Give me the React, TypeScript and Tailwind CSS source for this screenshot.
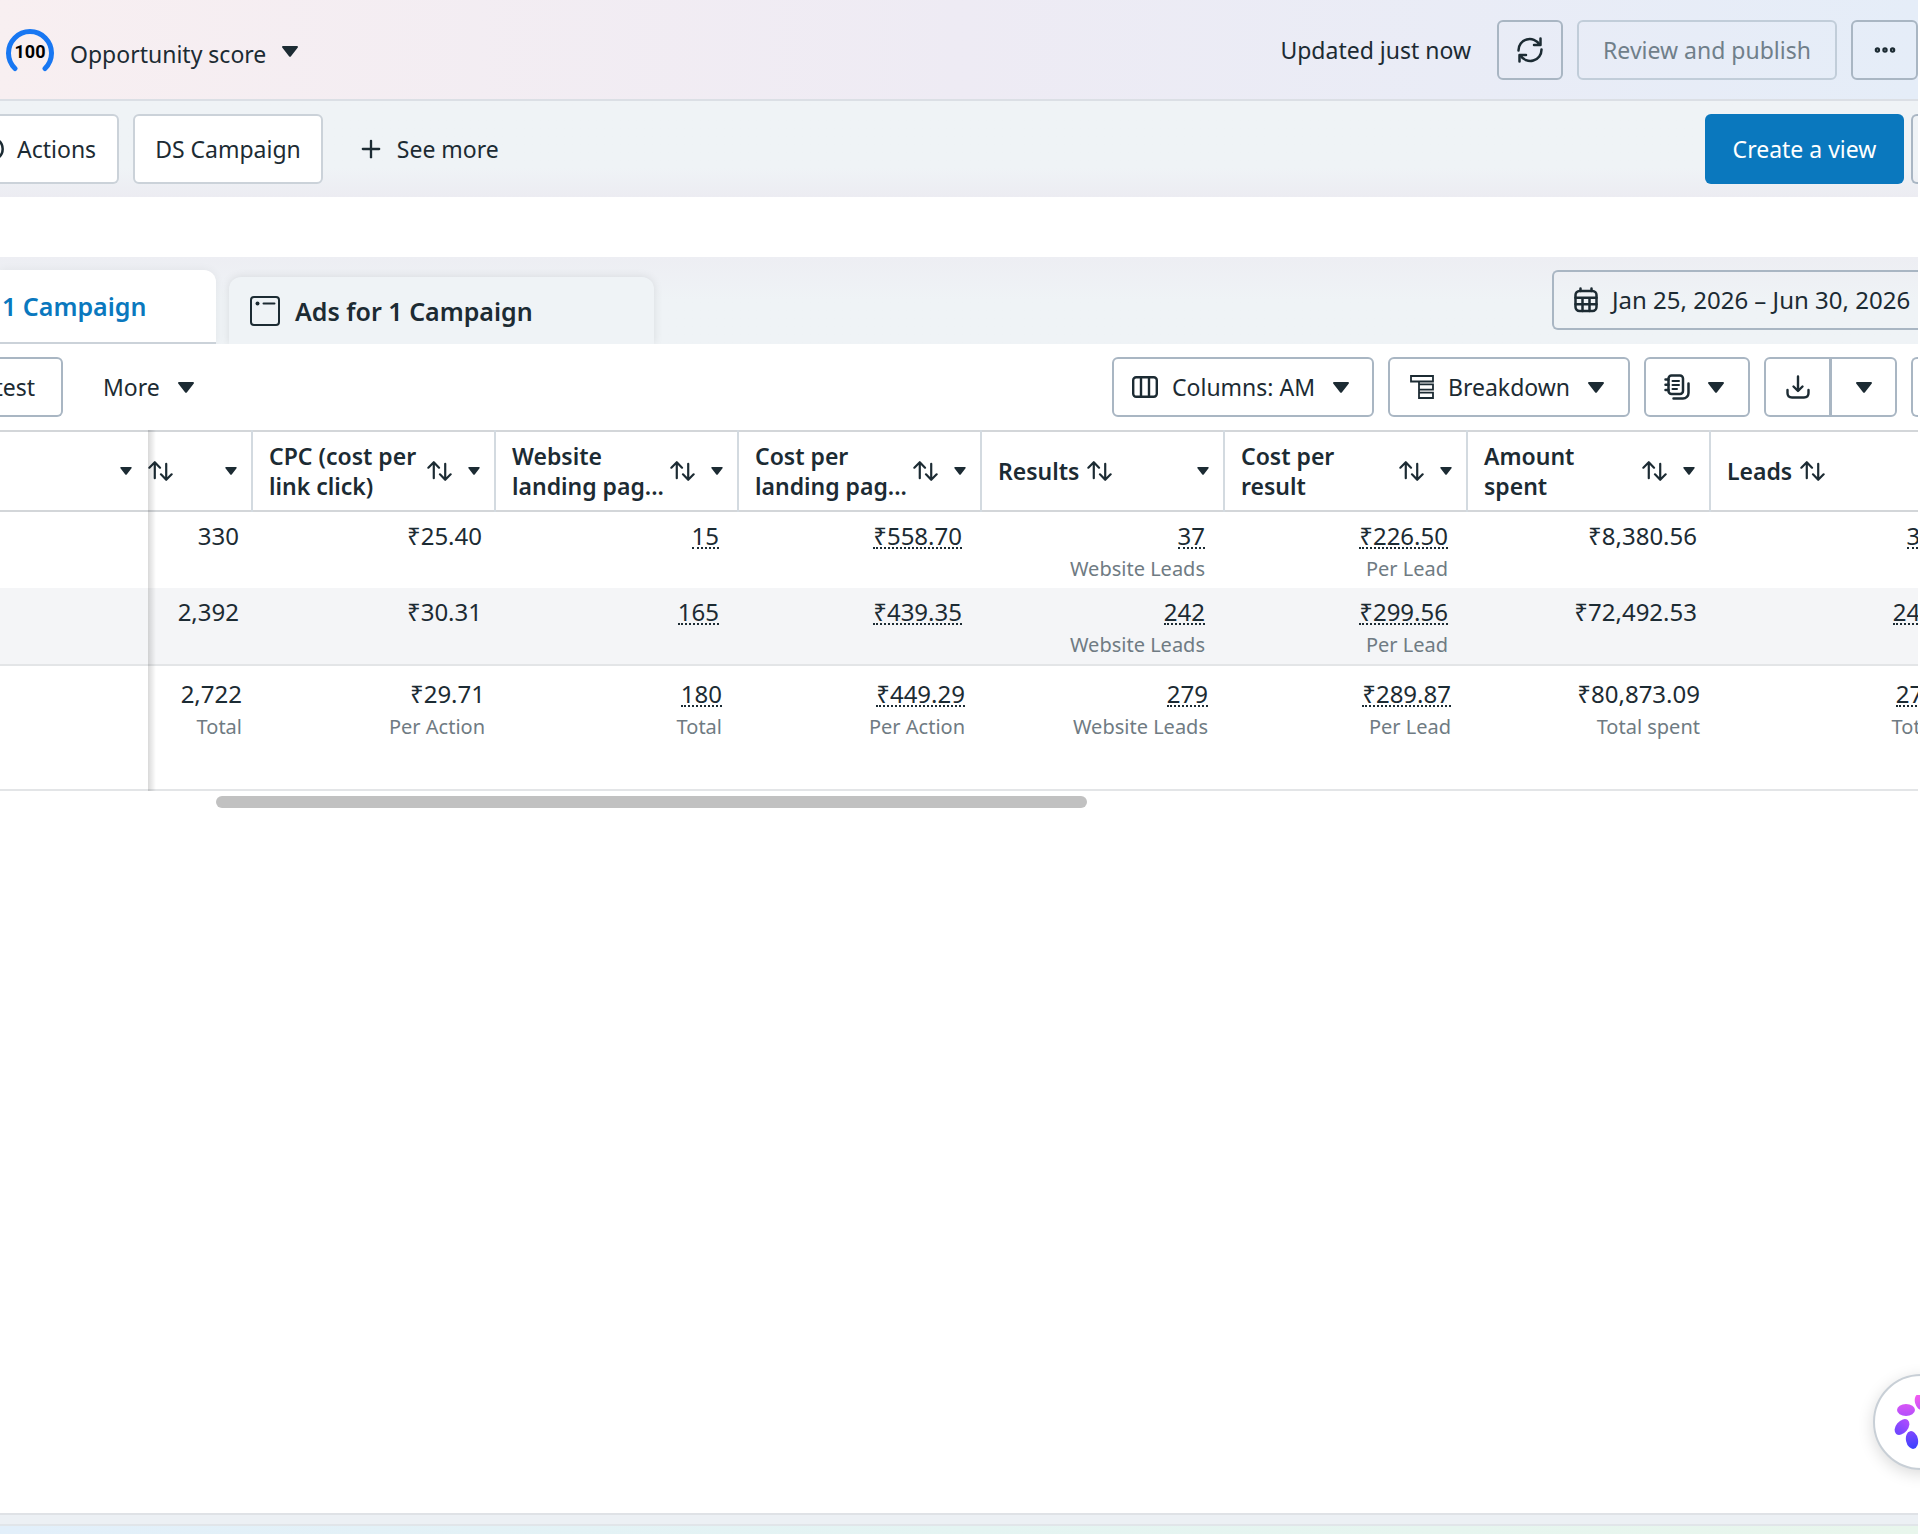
import type { ReactNode } from "react";
import { Ellipsis, Plus } from "lucide-react";

type Cell = { value: string; note?: string; dotted?: boolean };

type Column = { lines: string[]; stacked?: boolean; caret?: boolean };

const COLUMNS: Column[] = [
  { lines: ["CPC (cost per", "link click)"], stacked: true, caret: true },
  { lines: ["Website", "landing pag..."], stacked: true, caret: true },
  { lines: ["Cost per", "landing pag..."], stacked: true, caret: true },
  { lines: ["Results"], caret: true },
  { lines: ["Cost per", "result"], stacked: true, caret: true },
  { lines: ["Amount", "spent"], stacked: true, caret: true },
  { lines: ["Leads"] },
];

const ROWS: Cell[][] = [
  [
    { value: "330" },
    { value: "₹25.40" },
    { value: "15", dotted: true },
    { value: "₹558.70", dotted: true },
    { value: "37", note: "Website Leads", dotted: true },
    { value: "₹226.50", note: "Per Lead", dotted: true },
    { value: "₹8,380.56" },
    { value: "37", dotted: true },
  ],
  [
    { value: "2,392" },
    { value: "₹30.31" },
    { value: "165", dotted: true },
    { value: "₹439.35", dotted: true },
    { value: "242", note: "Website Leads", dotted: true },
    { value: "₹299.56", note: "Per Lead", dotted: true },
    { value: "₹72,492.53" },
    { value: "242", dotted: true },
  ],
];

const TOTALS: Cell[] = [
  { value: "2,722", note: "Total" },
  { value: "₹29.71", note: "Per Action" },
  { value: "180", note: "Total", dotted: true },
  { value: "₹449.29", note: "Per Action", dotted: true },
  { value: "279", note: "Website Leads", dotted: true },
  { value: "₹289.87", note: "Per Lead", dotted: true },
  { value: "₹80,873.09", note: "Total spent" },
  { value: "279", note: "Total", dotted: true },
];

function Caret({ small = false }: { small?: boolean }) {
  return (
    <svg viewBox="0 0 16 11" className={small ? "w-3 h-2 shrink-0" : "w-4 h-[11px] shrink-0"} fill="currentColor">
      <path d="M1.2 0h13.6c1 0 1.5 1 .8 1.8L9 10.3c-.5.7-1.5.7-2 0L.4 1.8C-.3 1 .2 0 1.2 0z" />
    </svg>
  );
}

function SortIcon() {
  return (
    <svg viewBox="0 0 26 21" className="w-[25px] h-5 shrink-0" fill="none" stroke="currentColor" strokeWidth="2.3" strokeLinecap="round" strokeLinejoin="round">
      <path d="M7 18V1.5M1.3 7 7 1.3 12.5 7M19 3v16.5M13.5 14l5.500 5.700 5.700-5.700" />
    </svg>
  );
}

function RefreshIcon() {
  return (
    <svg viewBox="0 0 26 26" className="w-[26px] h-[26px]" fill="none" stroke="currentColor" strokeWidth="2.5" strokeLinecap="round" strokeLinejoin="round">
      <path d="M1.500 13.500A11.300 11.300 0 0 1 22.500 7.500M24.500 12.500A11.300 11.300 0 0 1 3.500 18.500" />
      <path d="M23.500 1.500V8H17M2.500 24.500V18H9" />
    </svg>
  );
}

function ColumnsIcon() {
  return (
    <svg viewBox="0 0 26 22" className="w-[26px] h-[22px]" fill="none" stroke="currentColor" strokeWidth="2.4">
      <rect x="1.2" y="1.2" width="23.6" height="19.6" rx="3" />
      <path d="M9 1v20M17 1v20" />
    </svg>
  );
}

function BreakdownIcon() {
  return (
    <svg viewBox="0 0 24 24" className="w-6 h-6" fill="none" stroke="currentColor" strokeWidth="1.8">
      <path d="M1 1h22v5.500H1zM9 9.300h14v5.400H9zM9 17.700h14v5.300H9zM9 6.500v2.800M9 14.700v3" />
    </svg>
  );
}

function ReportsIcon() {
  return (
    <svg viewBox="0 0 26 26" className="w-[26px] h-[26px]" fill="none" stroke="currentColor" strokeWidth="2.5" strokeLinecap="round" strokeLinejoin="round">
      <rect x="4.5" y="1.5" width="14.5" height="18.5" rx="3" />
      <path d="M8.500 7h6.500M8.500 11h6.500M8.500 15h4.500" strokeWidth="2" />
      <path d="M1.500 5.500h3M1.500 10.700h3M1.500 16h3M24.500 9.500V19a5.500 5.500 0 0 1-5.500 5.500h-9.500" />
    </svg>
  );
}

function DownloadIcon() {
  return (
    <svg viewBox="0 0 24 24" className="w-6 h-6" fill="none" stroke="currentColor" strokeWidth="2.4" strokeLinecap="round" strokeLinejoin="round">
      <path d="M12 1.500V15M7.500 11.500l4.500 4.500 4.500-4.500M1.500 15v3c0 3 1.500 4.500 4.500 4.500h12c3 0 4.500-1.500 4.500-4.500v-3" />
    </svg>
  );
}

function CalendarIcon() {
  return (
    <svg viewBox="0 0 24 26" className="w-6 h-[26px] shrink-0" fill="none" stroke="currentColor" strokeWidth="2.5" strokeLinecap="round">
      <rect x="1.500" y="4" width="21" height="20" rx="4" />
      <path d="M6.500 1.500V4M17.500 1.500V4M1.500 10.800h21M1.500 17.300h21M8.500 11v13M15.500 11v13" />
    </svg>
  );
}

function AdIcon() {
  return (
    <svg viewBox="0 0 30 30" className="w-[30px] h-[30px]" fill="none" stroke="currentColor" strokeWidth="2" strokeLinecap="round">
      <rect x="1" y="1" width="28" height="28" rx="3" />
      <path d="M13.500 7.500h11" />
      <circle cx="7.500" cy="7.500" r="2" fill="currentColor" stroke="none" />
    </svg>
  );
}

function ScoreRing() {
  return (
    <div className="relative w-12 h-12">
      <svg viewBox="0 0 48 48" className="w-12 h-12" fill="none" stroke="#1877f2" strokeWidth="5" strokeLinecap="round">
        <path d="M9 40.500A21.500 21.500 0 1 1 39 40.500" />
      </svg>
      <span className="absolute inset-0 flex items-center justify-center font-['Roboto'] text-[18px] leading-[44px] font-bold text-black">100</span>
    </div>
  );
}

function OutlineButton({ label, className = "", children }: { label?: string; className?: string; children: ReactNode }) {
  return (
    <button type="button" aria-label={label} className={`h-[60px] flex items-center shrink-0 rounded-md border-2 border-[#a9b6c3] ${className}`}>
      {children}
    </button>
  );
}

function Amount({ cell, pad }: { cell: Cell; pad: string }) {
  return (
    <td className={`align-top text-right whitespace-nowrap ${pad}`}>
      <div className="h-[33px] text-[24px] leading-8">
        {cell.dotted ? (
          <span className="inline-block leading-[22px] border-b-2 border-dotted border-[#1c2b33]">{cell.value}</span>
        ) : (
          cell.value
        )}
      </div>
      {cell.note && <div className="text-[20px] leading-8 text-[#6f7b83]">{cell.note}</div>}
    </td>
  );
}

function HeaderCell({ column }: { column: Column }) {
  return (
    <th scope="col" className="border-l-2 border-[#d3dae0] pl-4 pr-[14px] text-left font-semibold">
      <div className={column.stacked ? "flex items-center" : "flex items-center gap-2"}>
        <div className={column.stacked ? "flex-1 min-w-0 whitespace-nowrap" : "whitespace-nowrap"}>
          {column.lines.map((line) => (
            <div key={line}>{line}</div>
          ))}
        </div>
        <SortIcon />
        {column.caret && <span className={column.stacked ? "ml-4" : "ml-auto"}><Caret small /></span>}
      </div>
    </th>
  );
}

export default function App() {
  return (
    <div className="min-h-screen flex flex-col overflow-hidden pr-[2px] bg-white font-['Noto_Sans','Open_Sans',sans-serif] text-[23px] leading-[30px] text-[#1c2b33]">
      <header className="h-[101px] flex items-center justify-between border-b-2 border-[#dbdfe5] bg-linear-to-r from-[#f8eff1] via-[#eeebf4] to-[#e5edf8]">
        <button type="button" className="flex items-center gap-4 pl-[6px] pt-1">
          <ScoreRing />
          <span className="pt-1">Opportunity score</span>
          <Caret />
        </button>
        <div className="flex items-center gap-[14px]">
          <span className="mr-3">Updated just now</span>
          <OutlineButton label="Refresh" className="w-[66px] justify-center"><RefreshIcon /></OutlineButton>
          <OutlineButton className="w-[260px] justify-center border-[#c1cdd9] text-[#707f8a]">Review and publish</OutlineButton>
          <OutlineButton label="More options" className="w-[67px] justify-center"><Ellipsis size={26} strokeWidth={3} /></OutlineButton>
        </div>
      </header>

      <section className="h-24 flex items-center justify-between bg-linear-to-b from-[#eff3f6] from-70% to-[#ececf2]">
        <div className="flex items-center">
          <button type="button" className="h-[70px] flex items-center gap-[13px] pr-[21px] rounded-r-md border-2 border-l-0 border-[#cbd2d9] bg-white">
            <svg viewBox="0 0 4 22" className="w-1 h-[22px]" fill="none" stroke="currentColor" strokeWidth="2.5">
              <path d="M-2 2a11 11 0 0 1 0 18" />
            </svg>
            Actions
          </button>
          <button type="button" className="h-[70px] ml-[14px] px-5 rounded-md border-2 border-[#cbd2d9] bg-white">DS Campaign</button>
          <button type="button" className="flex items-center gap-3 ml-[34px]">
            <Plus size={28} strokeWidth={2} />
            See more
          </button>
        </div>
        <div className="flex items-center gap-[7px]">
          <button type="button" className="w-[199px] h-[70px] rounded-md bg-[#0a78be] text-white">Create a view</button>
          <button type="button" aria-label="View options" className="w-[7px] h-[70px] rounded-l-md border-2 border-r-0 border-[#a9b6c3]" />
        </div>
      </section>

      <div className="h-[60px]" />

      <nav className="h-[87px] flex items-end justify-between bg-linear-to-b from-[#edeef3] to-[#eff3f6] to-50%">
        <div className="flex items-end gap-[13px] text-[25px] font-semibold">
          <button type="button" className="w-[216px] h-[74px] pl-[2px] text-left whitespace-nowrap rounded-tr-xl border-b-2 border-[#cbd2d9] bg-white text-[#0a78be] shadow-[0_0_10px_rgba(0,0,0,0.06)]">1 Campaign</button>
          <button type="button" className="w-[425px] h-[67px] pl-[21px] flex items-center gap-[15px] rounded-t-xl bg-[#eff3f6] shadow-[0_0_10px_rgba(0,0,0,0.1)]">
            <AdIcon />
            Ads for 1 Campaign
          </button>
        </div>
        <button type="button" className="w-[366px] h-[60px] mb-[14px] pl-5 flex items-center gap-[14px] rounded-l-md border-2 border-r-0 border-[#a9b6c3] text-[24px] whitespace-nowrap">
          <CalendarIcon />
          Jan 25, 2026 – Jun 30, 2026
        </button>
      </nav>

      <div className="h-[86px] flex items-center justify-between bg-white">
        <div className="flex items-center">
          <button type="button" className="w-[63px] h-[60px] pr-[26px] flex items-center justify-end rounded-r-md border-2 border-l-0 border-[#a9b6c3]">test</button>
          <button type="button" className="flex items-center gap-[18px] ml-10">
            More
            <Caret />
          </button>
        </div>
        <div className="flex items-center gap-[14px]">
          <OutlineButton className="w-[262px] pl-[18px] gap-[14px]">
            <ColumnsIcon />
            <span className="mr-1">Columns: AM</span>
            <Caret />
          </OutlineButton>
          <OutlineButton className="w-[242px] pl-5 gap-[14px]">
            <BreakdownIcon />
            <span className="mr-1">Breakdown</span>
            <Caret />
          </OutlineButton>
          <OutlineButton label="Reports" className="w-[106px] pl-[18px] gap-[18px]"><ReportsIcon /><Caret /></OutlineButton>
          <div className="flex">
            <OutlineButton label="Export" className="w-[67px] justify-center rounded-r-none"><DownloadIcon /></OutlineButton>
            <OutlineButton label="Export options" className="w-[66px] justify-center rounded-l-none border-l-1"><Caret /></OutlineButton>
          </div>
          <button type="button" aria-label="Charts" className="w-[7px] h-[60px] rounded-l-md border-2 border-r-0 border-[#a9b6c3]" />
        </div>
      </div>

      <div className="relative overflow-hidden">
        <table className="w-[1953px] table-fixed border-collapse">
          <colgroup>
            <col className="w-[148px]" />
            <col className="w-[104px]" />
            {COLUMNS.map((column, i) => (
              <col key={i} className="w-[243px]" />
            ))}
          </colgroup>
          <thead>
            <tr className="h-20 border-y-2 border-[#d3d6d9]">
              <th scope="col" aria-label="Campaign"><div className="flex justify-end pr-4"><Caret small /></div></th>
              <th scope="col" aria-label="Link clicks">
                <div className="flex items-center justify-between pr-[14px]"><SortIcon /><Caret small /></div>
              </th>
              {COLUMNS.map((column, i) => (
                <HeaderCell key={i} column={column} />
              ))}
            </tr>
          </thead>
          <tbody>
            {ROWS.map((row, i) => (
              <tr key={i} className="h-[77px] even:bg-[#f4f5f7]">
                <td />
                {row.map((cell, j) => (
                  <Amount key={j} cell={cell} pad={cell.dotted ? "pt-2 pr-[19px]" : "pt-2 pr-[13px]"} />
                ))}
              </tr>
            ))}
          </tbody>
          <tfoot>
            <tr className="h-[125px] border-y-2 border-[#e3e5e7]">
              <td />
              {TOTALS.map((cell, j) => (
                <Amount key={j} cell={cell} pad={cell.dotted ? "pt-3 pr-4" : "pt-3 pr-[10px]"} />
              ))}
            </tr>
          </tfoot>
        </table>
        {/* edge of the frozen columns */}
        <div className="absolute inset-y-0 left-[148px] w-2 bg-linear-to-r from-black/15 to-transparent" />
      </div>

      <div className="pt-[5px] pl-[216px]">
        <div className="w-[871px] h-3 rounded-full bg-[#c1c1c1]" />
      </div>

      <div className="flex-1" />

      <footer className="h-[21px] flex flex-col border-t-2 border-[#dfe2e6] bg-[#ecf0f4]">
        <div className="mt-auto h-[10px] border-t-2 border-[#e1e5e9] bg-linear-to-r from-[#e2effa] via-[#e4f4f2] to-[#e8f6ec]" />
      </footer>

      <button type="button" aria-label="Assistant" className="fixed right-[-49px] bottom-16 w-24 h-24 flex items-center justify-center rounded-full border-2 border-[#c8cfd6] bg-white shadow-[0_4px_16px_rgba(0,0,0,0.15)]">
        <svg viewBox="-27 -27 54 54" className="w-[54px] h-[54px]">
          <defs>
            <linearGradient id="petals" gradientUnits="userSpaceOnUse" x1="0" y1="-27" x2="0" y2="27">
              <stop offset="0" stopColor="#f25bf0" />
              <stop offset="0.5" stopColor="#a24bff" />
              <stop offset="1" stopColor="#3a42ff" />
            </linearGradient>
          </defs>
          <g fill="url(#petals)">
            <ellipse cx="-15" cy="-12" rx="9" ry="6" />
            <ellipse cx="-19" cy="5" rx="6" ry="9" transform="rotate(40 -19 5)" />
            <ellipse cx="-9" cy="18" rx="6" ry="9" transform="rotate(-12 -9 18)" />
            <ellipse cx="-1" cy="-20" rx="5" ry="8" transform="rotate(-15 -1 -20)" />
            <ellipse cx="13" cy="-12" rx="6" ry="9" transform="rotate(40 13 -12)" />
            <ellipse cx="16" cy="5" rx="9" ry="6" transform="rotate(20 16 5)" />
            <ellipse cx="7" cy="17" rx="6" ry="9" transform="rotate(-20 7 17)" />
          </g>
        </svg>
      </button>
    </div>
  );
}
